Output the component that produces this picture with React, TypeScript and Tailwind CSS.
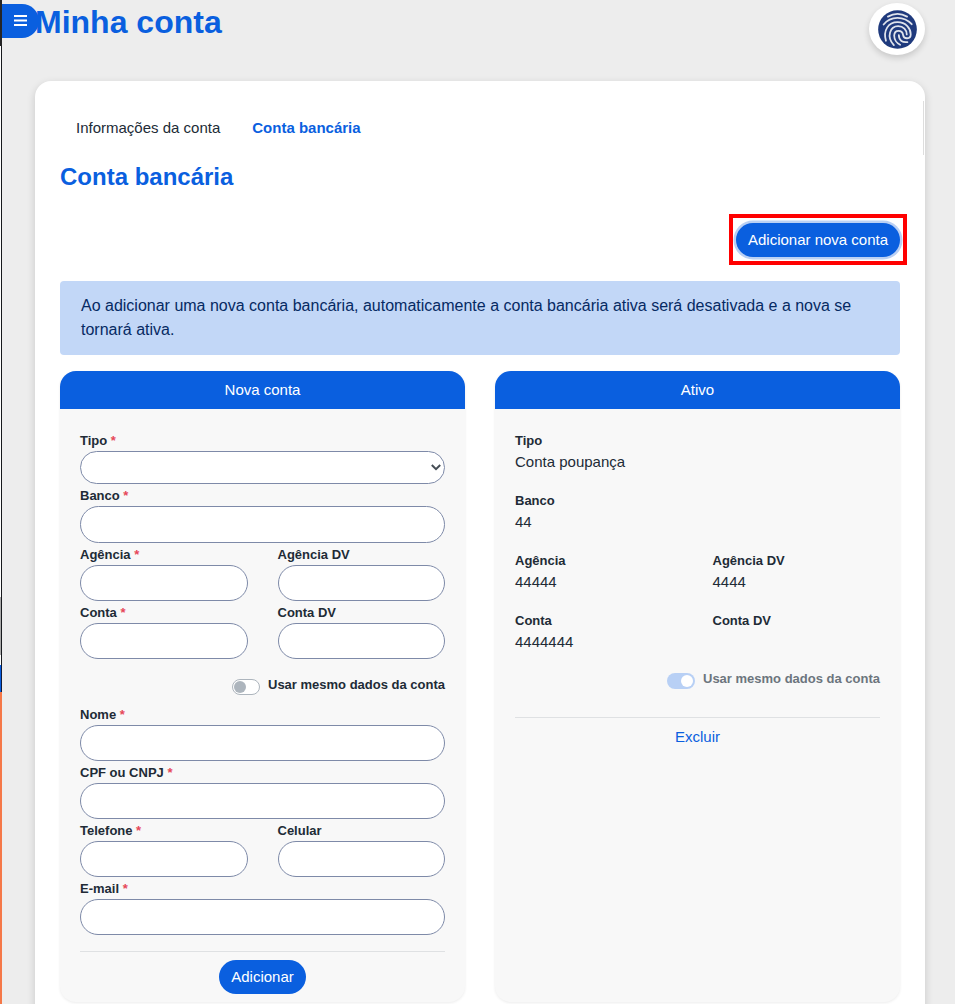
import type { ReactNode } from "react";

function Label({ children, required = false }: { children: ReactNode; required?: boolean }) {
  return (
    <label className="block h-[22px] text-[13px] leading-[24px] font-bold text-[#212b36]">
      {children}
      {required && <span className="font-bold text-[#e64759]"> *</span>}
    </label>
  );
}

function Field({ label, required = false, tall = false }: { label: string; required?: boolean; tall?: boolean }) {
  return (
    <div>
      <Label required={required}>{label}</Label>
      <input
        className={`block w-full rounded-[20px] border border-[#7e8aa8] bg-white px-3 text-[15px] outline-none ${tall ? "h-[37px]" : "h-[36px]"}`}
      />
    </div>
  );
}

function Value({ label, children }: { label: string; children?: ReactNode }) {
  return (
    <div className="h-[60px]">
      <div className="h-[22px] text-[13px] leading-[24px] font-bold text-[#212b36]">{label}</div>
      <div className="text-[15px] leading-[22px]">{children}</div>
    </div>
  );
}

function Card({ title, children }: { title: string; children: ReactNode }) {
  return (
    <section className="flex h-[631px] w-[405px] flex-col rounded-[16px] bg-[#f8f8f8] shadow-[0_1px_3px_rgba(0,0,0,0.08)]">
      <h3 className="h-[38px] shrink-0 rounded-t-[16px] bg-[#0a5fdf] text-center text-[15px] leading-[38px] text-white">
        {title}
      </h3>
      <div className="flex flex-1 flex-col px-5 pt-5">{children}</div>
    </section>
  );
}

function Fingerprint() {
  return (
    <svg viewBox="0 0 118 118" className="h-[39px] w-[39px]" fill="none">
      <circle cx="59" cy="59" r="58.5" fill="#1f3a7d" />
      <g stroke="#dfe3ec" strokeWidth="5.4" strokeLinecap="round">
        <path d="M30 20Q59 4 88 20" />
        <path d="M17 44C38 17 79 17 102 43" />
        <path d="M24 93C15 62 31 37 59 37C85 37 99 56 99 74C99 89 78 89 76 76C74 59 50 58 49 77C49 90 58 101 67 105" />
        <path d="M48 106C24 80 37 49 61 49C77 49 87 61 87 74" />
        <path d="M63 76C63 93 75 99 89 97" />
      </g>
    </svg>
  );
}

export default function App() {
  return (
    <div className="flex h-[1004px] w-[955px] overflow-hidden bg-[#ededed] font-['Liberation_Sans',sans-serif] text-[#212b36]">
      <div className="flex w-[2px] shrink-0 flex-col">
        <div className="h-[46px] bg-[#252525]" />
        <div className="h-[551px] border-r border-[#17191d] bg-white" />
        <div className="h-[58px] border-r border-[#17191d] bg-[#aaaaaa]" />
        <div className="h-[10px] border-r border-[#17191d] bg-white" />
        <div className="h-[27px] border-r border-[#101a38] bg-[#0a5fdf]" />
        <div className="flex-1 bg-[#f57848]" />
      </div>

      <div className="flex flex-1 flex-col">
        <header className="flex h-[81px] shrink-0 items-start">
          <button aria-label="Menu" className="mt-1 flex h-[34px] w-[37px] shrink-0 items-start rounded-r-[17px] bg-[#0a5fdf] pt-[11px] pl-3">
            <svg viewBox="0 0 13 11" className="h-[11px] w-[13px]" fill="white">
              <path d="M0 0h13v2H0zM0 4.4h13v2H0zM0 9h13v2H0z" />
            </svg>
          </button>
          <h1 className="-ml-[4px] mt-[3px] text-[32px] leading-[38px] font-bold text-[#0a5fdf]">Minha conta</h1>
          <div className="mt-[3px] mr-[30px] ml-auto flex h-[52px] w-14 items-center justify-center rounded-[50%] bg-white pt-px shadow-[0_3px_6px_rgba(0,0,0,0.16)]">
            <Fingerprint />
          </div>
        </header>

        <main className="relative ml-[33px] h-[950px] w-[890px] shrink-0 rounded-[16px] bg-white px-[25px] shadow-[0_3px_8px_rgba(0,0,0,0.16)]">
          <div className="absolute top-5 right-px h-[54px] w-px bg-[#dddddd]" />
          <nav className="flex h-[72px] gap-8 pt-[36px] pl-4 text-[15px] leading-[22px]">
            <span>Informações da conta</span>
            <span className="font-bold text-[#0a5fdf]">Conta bancária</span>
          </nav>
          <h2 className="mt-[9px] text-[24px] leading-[30px] font-bold text-[#0a5fdf]">Conta bancária</h2>

          <div className="mt-[22px] -mr-[7px] ml-auto flex h-[51px] w-[178px] items-start justify-center border-4 border-[#ff0000] pt-[5px]">
            <button className="h-[34px] w-[164px] rounded-full bg-[#0a5fdf] text-[15px] text-white shadow-[0_0_0_2.5px_#bad0f4]">
              Adicionar nova conta
            </button>
          </div>

          <div className="mt-4 h-[74px] rounded-[4px] bg-[#c2d7f7] px-[21px] py-[13px] text-[16px] leading-6 text-[#062a63]">
            Ao adicionar uma nova conta bancária, automaticamente a conta bancária ativa será desativada e a nova se tornará ativa.
          </div>

          <div className="mt-4 flex gap-[30px]">
            <Card title="Nova conta">
              <Label required>Tipo</Label>
              <div className="flex h-[33px] shrink-0 items-center justify-end rounded-[17px] border border-[#7e8aa8] bg-white pr-[3px]">
                <svg viewBox="0 0 10 7" className="h-[7px] w-[10px]" fill="none" stroke="#454d55" strokeWidth="2">
                  <path d="M.8 1L5 5.2L9.2 1" />
                </svg>
              </div>
              <Field label="Banco" required tall />
              <div className="grid grid-cols-2 gap-x-[30px]">
                <Field label="Agência" required />
                <Field label="Agência DV" />
                <Field label="Conta" required />
                <Field label="Conta DV" />
              </div>
              <div className="flex h-[44px] shrink-0 items-start justify-end pt-[15px]">
                <span className="mt-[5px] mr-2 flex h-4 w-7 items-center rounded-full border border-[#adb5bd] bg-white pl-px">
                  <span className="h-3 w-3 rounded-full bg-[#adb5bd]" />
                </span>
                <span className="text-[13px] leading-[22px] font-bold">Usar mesmo dados da conta</span>
              </div>
              <Field label="Nome" required />
              <Field label="CPF ou CNPJ" required />
              <div className="grid grid-cols-2 gap-x-[30px]">
                <Field label="Telefone" required />
                <Field label="Celular" />
              </div>
              <Field label="E-mail" required />
              <div className="mt-4 flex justify-center border-t border-[#dfe1e3] pt-2">
                <button className="h-[34px] w-[87px] rounded-full bg-[#0a5fdf] text-[15px] text-white">Adicionar</button>
              </div>
            </Card>

            <Card title="Ativo">
              <Value label="Tipo">Conta poupança</Value>
              <Value label="Banco">44</Value>
              <div className="grid grid-cols-2 gap-x-[30px]">
                <Value label="Agência">44444</Value>
                <Value label="Agência DV">4444</Value>
                <Value label="Conta">4444444</Value>
                <Value label="Conta DV" />
              </div>
              <div className="flex h-[48px] shrink-0 items-start justify-end">
                <span className="mt-[4px] mr-2 flex h-4 w-7 items-center justify-end rounded-full bg-[#b8d0f5] pr-[2px]">
                  <span className="h-3 w-3 rounded-full bg-white" />
                </span>
                <span className="text-[13px] leading-[20px] font-bold text-[#6c757d]">Usar mesmo dados da conta</span>
              </div>
              <div className="border-t border-[#dfe1e3] pt-2 text-center text-[15px] leading-[22px]">
                <a className="text-[#0a5fdf]">Excluir</a>
              </div>
            </Card>
          </div>
        </main>
      </div>
    </div>
  );
}
